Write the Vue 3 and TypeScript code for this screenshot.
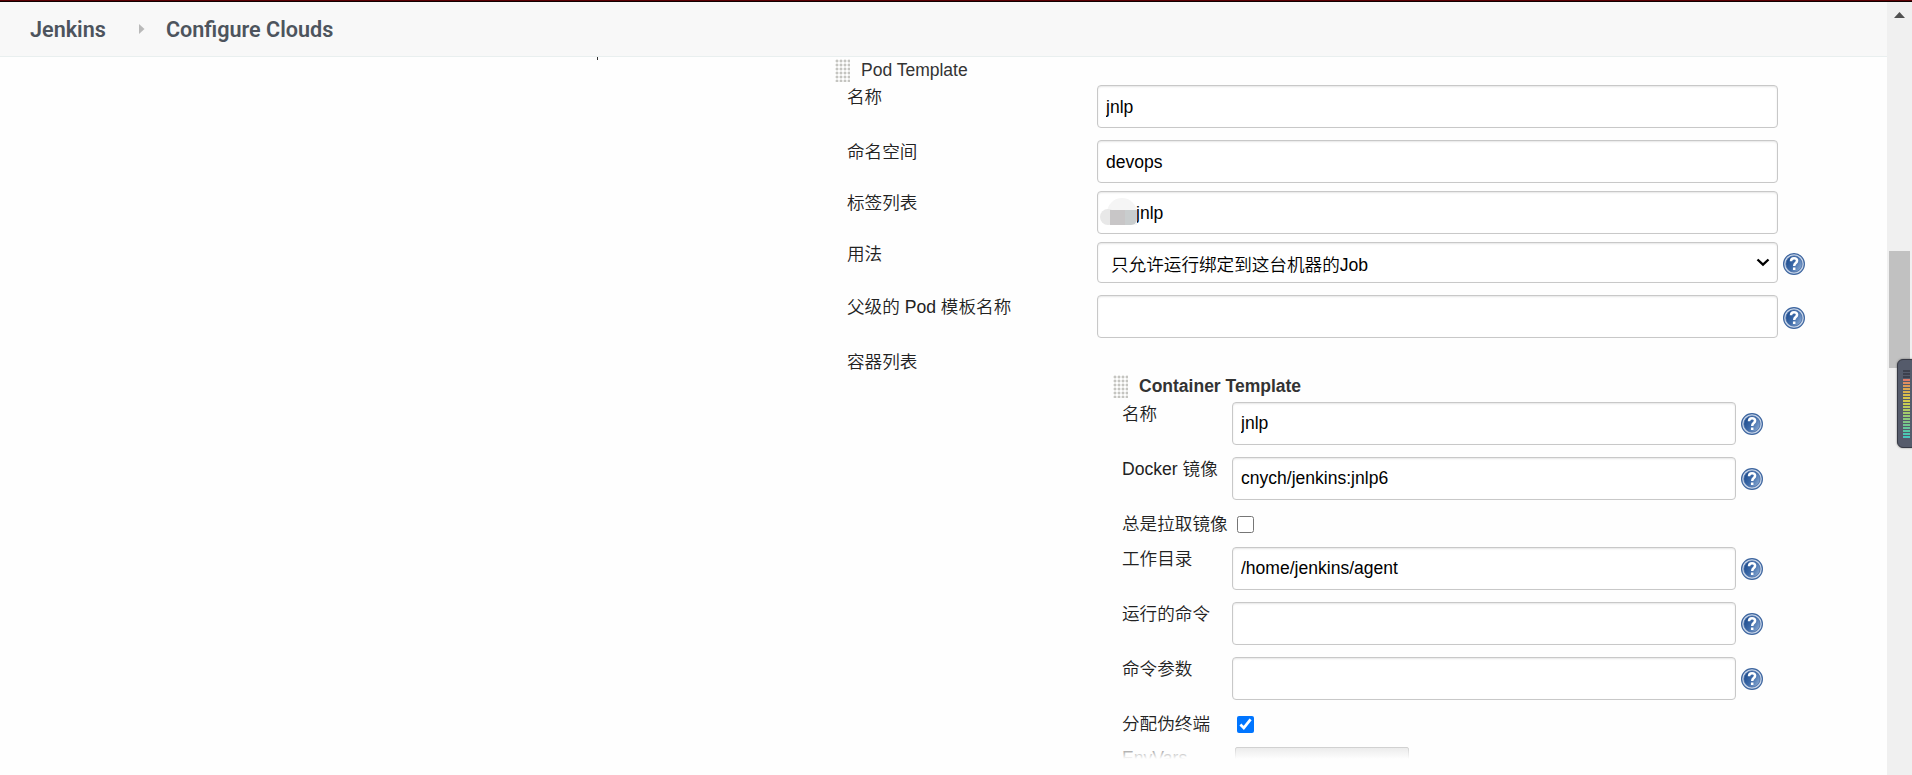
<script setup lang="ts">
import { ref } from 'vue'

interface Field {
  label: string
  kind: 'text' | 'select' | 'check'
  value?: string
  checked?: boolean
  help?: boolean
  masked?: boolean
  size: string
}

const podFields = ref<Field[]>([
  { label: '名称', kind: 'text', value: 'jnlp', size: 'tall' },
  { label: '命名空间', kind: 'text', value: 'devops', size: 'compact' },
  { label: '标签列表', kind: 'text', value: 'jnlp', masked: true, size: 'compact' },
  { label: '用法', kind: 'select', value: '只允许运行绑定到这台机器的Job', help: true, size: 'medium' },
  { label: '父级的 Pod 模板名称', kind: 'text', value: '', help: true, size: 'tall low' },
])

const containerFields = ref<Field[]>([
  { label: '名称', kind: 'text', value: 'jnlp', help: true, size: 'tall' },
  { label: 'Docker 镜像', kind: 'text', value: 'cnych/jenkins:jnlp6', help: true, size: 'tall' },
  { label: '总是拉取镜像', kind: 'check', checked: false, size: 'short' },
  { label: '工作目录', kind: 'text', value: '/home/jenkins/agent', help: true, size: 'tall' },
  { label: '运行的命令', kind: 'text', value: '', help: true, size: 'tall' },
  { label: '命令参数', kind: 'text', value: '', help: true, size: 'tall' },
  { label: '分配伪终端', kind: 'check', checked: true, size: 'short' },
])

const meterColors = [
  '#3d404d', '#3d404d', '#3d404d', '#e07a68', '#e08d5f', '#dc9a56', '#dca750', '#d9b24c', '#d8bd4b', '#d6c54b',
  '#d3cb4c', '#c9cd52', '#bccd5a', '#b0cc62', '#a3cb6a', '#97ca73', '#8bca7c', '#7fc985', '#72c98f', '#65c99a',
  '#58c9a6', '#4dc9b2', '#46c9bd',
]
</script>

<template>
  <div class="page">
    <div class="frame-edge"></div>
    <div class="viewport">
      <div class="content">
        <header class="breadcrumbs">
          <span>Jenkins</span>
          <svg class="crumb-arrow" width="6" height="10" viewBox="0 0 6 10"><path d="M0 0L5.5 5L0 10Z" fill="#b9b9b9" /></svg>
          <span>Configure Clouds</span>
        </header>
        <main class="form">
          <i class="tick"></i>
          <div class="section-title">
            <i class="handle"></i><span>Pod Template</span>
          </div>
          <section class="pod">
            <div v-for="f in podFields" :key="f.label" class="row" :class="f.size">
              <label class="label">{{ f.label }}</label>
              <div class="control">
                <input v-if="f.kind === 'text'" v-model="f.value" type="text" class="field" :class="{ indented: f.masked }" />
                <div v-else class="field select">
                  <span>{{ f.value }}</span>
                  <svg width="14" height="9" viewBox="0 0 14 9"><path d="M1.5 1.5L7 6.7L12.5 1.5" fill="none" stroke="#000" stroke-width="2.3" /></svg>
                </div>
                <div v-if="f.masked" class="mask"><i class="cloud"></i><i class="side"></i><i class="block"></i><i class="block end"></i></div>
              </div>
              <svg v-if="f.help" class="help" width="22" height="22" viewBox="0 0 22 22">
                <circle cx="11" cy="11" r="10.4" fill="#c7d5e8" stroke="#3d659f" stroke-width="1.2" />
                <circle cx="11" cy="11" r="8.1" fill="url(#helpFill)" stroke="#456ba5" stroke-width=".8" />
                <path d="M8 8.2C8 5.9 9.3 5.2 11 5.2C12.9 5.2 14.1 6.2 14.1 7.8C14.1 10.2 11.2 10 11.2 12.9M11.2 14.5V17" fill="none" stroke="#fff" stroke-width="2.5" />
              </svg>
            </div>
            <div class="row">
              <label class="label">容器列表</label>
              <div class="containers">
                <div class="section-title bold">
                  <i class="handle"></i><span>Container Template</span>
                </div>
                <div class="container-fields">
                  <div v-for="f in containerFields" :key="f.label" class="row" :class="f.size">
                    <label class="label">{{ f.label }}</label>
                    <input v-if="f.kind === 'check'" v-model="f.checked" type="checkbox" class="check" />
                    <div v-else class="control"><input v-model="f.value" type="text" class="field" /></div>
                    <svg v-if="f.help" class="help" width="22" height="22" viewBox="0 0 22 22">
                      <circle cx="11" cy="11" r="10.4" fill="#c7d5e8" stroke="#3d659f" stroke-width="1.2" />
                      <circle cx="11" cy="11" r="8.1" fill="url(#helpFill)" stroke="#456ba5" stroke-width=".8" />
                      <path d="M8 8.2C8 5.9 9.3 5.2 11 5.2C12.9 5.2 14.1 6.2 14.1 7.8C14.1 10.2 11.2 10 11.2 12.9M11.2 14.5V17" fill="none" stroke="#fff" stroke-width="2.5" />
                    </svg>
                  </div>
                  <div class="row env">
                    <label class="label">EnvVars</label>
                    <button class="add" type="button" aria-label="EnvVars"></button>
                  </div>
                </div>
              </div>
            </div>
          </section>
        </main>
        <div class="fade"></div>
      </div>
      <aside class="scrollbar">
        <svg class="up" width="11" height="6" viewBox="0 0 11 6"><path d="M5.5 0L11 6H0Z" fill="#505050" /></svg>
        <div class="thumb"></div>
      </aside>
    </div>
    <div class="meter"><i v-for="(c, i) in meterColors" :key="i" :style="{ background: c }"></i></div>
    <svg class="defs" width="0" height="0">
      <defs>
        <linearGradient id="helpFill" x1="0" y1="0.2" x2="1" y2="0.8">
          <stop offset="0" stop-color="#1b4a8c" />
          <stop offset=".5" stop-color="#3e6ba9" />
          <stop offset="1" stop-color="#8eadd5" />
        </linearGradient>
      </defs>
    </svg>
  </div>
</template>

<style>
body {
  margin: 0;
  overflow: hidden;
}
</style>

<style scoped>
.page {
  position: relative;
  width: 1912px;
  height: 775px;
  overflow: hidden;
  background: #fefefe;
  color: #333;
  font-family: "Liberation Sans", "Noto Sans CJK SC", sans-serif;
  font-size: 17.6px;
  line-height: 23px;
}
.page * {
  box-sizing: border-box;
}
.frame-edge {
  height: 2px;
  background: linear-gradient(#5c0003 50%, #100000 50%);
}
.viewport {
  display: flex;
  height: 773px;
}
.content {
  position: relative;
  width: 1887px;
  overflow: hidden;
}
.breadcrumbs {
  display: flex;
  align-items: center;
  height: 55px;
  padding-left: 30px;
  background: #f8f8f8;
  border-bottom: 1px solid #e9efef;
  color: #4d545d;
  font: 600 21.6px/53px Roboto, sans-serif;
}
.crumb-arrow {
  margin: 0 21px 0 33px;
}
.form {
  position: relative;
  padding: 2px 0 0 835px;
}
.tick {
  position: absolute;
  left: 597px;
  top: 0;
  width: 1px;
  height: 3px;
  background: #333;
}
.section-title {
  display: flex;
  height: 26px;
  font-size: 17.5px;
}
.section-title span {
  margin-left: 11px;
  line-height: 22px;
}
.bold {
  font-weight: bold;
}
.handle {
  width: 15px;
  height: 23px;
  background: radial-gradient(circle at 2px 2px, #c4c4c0 0 0.7px, #e2e2df 1.4px, transparent 1.9px) 0 0 / 4px 4px;
}
.pod {
  padding-left: 12px;
}
.row {
  display: flex;
  align-items: flex-start;
}
.tall {
  height: 55px;
}
.compact {
  height: 51px;
}
.medium {
  height: 53px;
}
.short {
  height: 35px;
}
.label {
  width: 250px;
  flex: none;
  color: #222;
  line-height: 25px;
  font-weight: 350;
  white-space: nowrap;
}
.env .label {
  color: #333;
  line-height: 23px;
}
.control {
  position: relative;
  width: 681px;
  flex: none;
}
.field {
  display: block;
  width: 100%;
  height: 43px;
  margin: 0;
  padding: 0 8px;
  border: 1px solid #c8c8c8;
  border-radius: 4px;
  background: #fff;
  box-shadow: inset 0 1px 2px rgba(0, 0, 0, 0.1);
  color: #000;
  font: inherit;
  font-size: 17.55px;
  outline: none;
}
.pod > .row > .control > input.field {
  padding-top: 1px;
}
.pod > .row > .control > input.indented {
  padding-left: 38px;
}
.select {
  display: flex;
  align-items: center;
  justify-content: space-between;
  height: 41px;
  padding: 5px 7px 0 13px;
  font-size: 17.6px;
  font-weight: 350;
}
.select span {
  padding-top: 1px;
}
.select svg {
  margin-top: -5px;
}
.help {
  flex: none;
  margin: 11px 0 0 5px;
}
.low .help {
  margin-top: 12px;
}
.mask {
  position: absolute;
  left: 3px;
  top: 7px;
  width: 38px;
  height: 28px;
  overflow: hidden;
}
.mask i {
  position: absolute;
}
.cloud {
  left: 7px;
  top: 0;
  width: 30px;
  height: 27px;
  border-radius: 15px 15px 0 0;
  background: #f5f5f5;
}
.side {
  left: 0;
  top: 11px;
  width: 16px;
  height: 16px;
  border-radius: 8px;
  background: #e8e8e8;
}
.mask .block {
  left: 10px;
  top: 12px;
  width: 15px;
  height: 15px;
  background: #c8c6c7;
}
.mask .end {
  left: 25px;
  width: 12px;
  border-radius: 0 0 6px 0;
  background: #c9cdce;
}
.containers {
  padding: 25px 0 0 16px;
}
.containers .section-title {
  height: 27px;
}
.container-fields {
  padding-left: 9px;
}
.container-fields .label {
  width: 110px;
}
.container-fields .control {
  width: 504px;
}
.check {
  width: 17px;
  height: 17px;
  margin: 4px 0 0 5px;
}
.add {
  width: 174px;
  height: 36px;
  margin: 0 0 0 3px;
  border: 1px solid #b0b0b0;
  border-radius: 2px;
  background: #ddd;
}
.fade {
  position: absolute;
  left: 0;
  right: 0;
  bottom: 0;
  height: 36px;
  background: linear-gradient(rgba(254, 254, 254, 0), #fefefe 20px);
}
.scrollbar {
  width: 25px;
  padding: 10px 2px 0;
  background: #f0f0f0;
}
.up {
  display: block;
  margin-left: 5px;
}
.thumb {
  height: 117px;
  margin-top: 233px;
  background: #c1c1c1;
}
.meter {
  position: absolute;
  left: 1897px;
  top: 359px;
  display: flex;
  flex-direction: column;
  gap: 1px;
  width: 20px;
  height: 89px;
  padding: 10px 0 0 5px;
  border: 1px solid #363944;
  border-radius: 6px;
  background: #555b6b;
  box-shadow: 0 0 2px rgba(0, 0, 0, 0.5);
}
.meter i {
  width: 7px;
  height: 2px;
}
.defs {
  position: absolute;
}
</style>
